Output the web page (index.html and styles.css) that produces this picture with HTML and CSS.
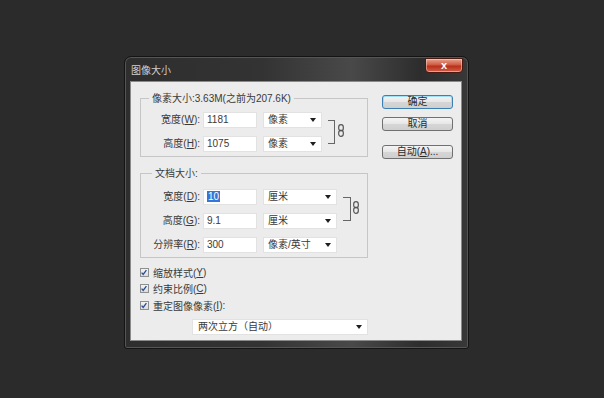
FILE: index.html
```html
<!DOCTYPE html>
<html>
<head>
<meta charset="UTF-8">
<title>图像大小</title>
<link rel="stylesheet" href="styles.css">
</head>
<body>
	<!-- 图像大小对话框 -->
	<div class="window">
		<div class="titlebar">
			<span class="title">图像大小</span>
			<span class="close">x</span>
		</div>
		<div class="client">
			<div class="left">
				<fieldset class="group g1">
					<legend>像素大小:3.63M(之前为207.6K)</legend>
					<div class="group_body">
						<div class="rows">
							<div class="row">
								<span class="label">宽度(<u>W</u>):</span>
								<span class="field">1181</span>
								<span class="select"><span>像素</span><i class="arrow"></i></span>
							</div>
							<div class="row">
								<span class="label">高度(<u>H</u>):</span>
								<span class="field">1075</span>
								<span class="select"><span>像素</span><i class="arrow"></i></span>
							</div>
						</div>
						<span class="bracket"></span>
						<svg class="chain" width="6" height="13" viewBox="0 0 6 13">
							<rect x="0.7" y="0.7" width="4.6" height="6" rx="2.3" fill="none" stroke="#555" stroke-width="1.2"/>
							<rect x="0.7" y="6.3" width="4.6" height="6" rx="2.3" fill="none" stroke="#555" stroke-width="1.2"/>
						</svg>
					</div>
				</fieldset>

				<fieldset class="group g2">
					<legend>文档大小:</legend>
					<div class="group_body">
						<div class="rows">
							<div class="row">
								<span class="label">宽度(<u>D</u>):</span>
								<span class="field"><span class="sel">10</span></span>
								<span class="select"><span>厘米</span><i class="arrow"></i></span>
							</div>
							<div class="row">
								<span class="label">高度(<u>G</u>):</span>
								<span class="field">9.1</span>
								<span class="select"><span>厘米</span><i class="arrow"></i></span>
							</div>
							<div class="row">
								<span class="label">分辨率(<u>R</u>):</span>
								<span class="field">300</span>
								<span class="select"><span>像素/英寸</span><i class="arrow"></i></span>
							</div>
						</div>
						<span class="bracket"></span>
						<svg class="chain" width="6" height="13" viewBox="0 0 6 13">
							<rect x="0.7" y="0.7" width="4.6" height="6" rx="2.3" fill="none" stroke="#555" stroke-width="1.2"/>
							<rect x="0.7" y="6.3" width="4.6" height="6" rx="2.3" fill="none" stroke="#555" stroke-width="1.2"/>
						</svg>
					</div>
				</fieldset>

				<div class="checks">
					<div class="check"><span class="box"><svg width="9" height="9" viewBox="0 0 9 9"><path d="M1.8 4.6 L3.6 6.6 L7.2 1.8" fill="none" stroke="#2a4f96" stroke-width="1.5"/></svg></span>缩放样式(<u>Y</u>)</div>
					<div class="check"><span class="box"><svg width="9" height="9" viewBox="0 0 9 9"><path d="M1.8 4.6 L3.6 6.6 L7.2 1.8" fill="none" stroke="#2a4f96" stroke-width="1.5"/></svg></span>约束比例(<u>C</u>)</div>
					<div class="check"><span class="box"><svg width="9" height="9" viewBox="0 0 9 9"><path d="M1.8 4.6 L3.6 6.6 L7.2 1.8" fill="none" stroke="#2a4f96" stroke-width="1.5"/></svg></span>重定图像像素(<u>I</u>):</div>
				</div>
				<span class="select resample"><span>两次立方（自动）</span><i class="arrow"></i></span>
			</div>

			<div class="right">
				<div class="button default">确定</div>
				<div class="button cancel">取消</div>
				<div class="button auto">自动(<u>A</u>)...</div>
			</div>
		</div>
	</div>
</body>
</html>
```

FILE: styles.css
```css
*{
	box-sizing: border-box;
}
body{
	margin: 0;
	width: 604px;
	height: 398px;
	overflow: hidden;
	background: #2b2b2b;
	font-family: "Liberation Sans", "Noto Sans CJK SC", sans-serif;
	font-size: 10px;
	color: #3a3a3a;
}
u{
	text-decoration: underline;
}
.window{
	margin: 56px 0 0 124px;
	width: 345px;
	height: 293px;
	border: 1px solid #141414;
	border-radius: 7px 7px 3px 3px;
	background: linear-gradient(90deg, #2e2e2e 0%, #333 40%, #494949 66%, #2d2d2d 86%, #383838 100%);
	padding: 0 6px 7px 5px;
	box-shadow: inset 0 0 0 1px #555;
}
.titlebar{
	height: 24px;
	display: flex;
	justify-content: space-between;
	align-items: flex-start;
}
.title{
	padding: 8px 0 0 1px;
	line-height: 12px;
	color: #d0d0d0;
}
.close{
	margin: 1px -1px 0 0;
	width: 38px;
	height: 15px;
	border: 1px solid #4a1a12;
	border-radius: 0 0 4px 4px;
	background: linear-gradient(#e6a390, #cf5a40 45%, #b8301c 55%, #d0604a);
	color: #fff;
	font-weight: bold;
	font-size: 11px;
	line-height: 12px;
	text-align: center;
	box-shadow: inset 0 0 0 1px rgba(255,220,210,0.5);
}
.client{
	height: 260px;
	border: 1px solid #8a8a8a;
	background: #ececec;
	display: flex;
	padding: 10px 8px 0 9px;
	gap: 14px;
}
.left{
	width: 228px;
}
.group{
	margin: 0;
	padding: 0;
	border: 1px solid #c6c6c6;
	min-width: 0;
}
.group legend{
	margin-left: 8px;
	padding: 0 3px;
	line-height: 13px;
}
.g1 .group_body{
	padding: 7px 0 4px 0;
}
.g2{
	margin-top: 10px;
}
.g2 legend{
	margin-left: 11px;
}
.g2 .group_body{
	padding: 9px 0 4px 0;
}
.group_body{
	display: flex;
	align-items: flex-start;
}
.rows{
	display: flex;
	flex-direction: column;
	gap: 8px;
}
.row{
	display: flex;
	align-items: center;
	height: 16px;
}
.label{
	width: 60px;
	text-align: right;
	padding-right: 1px;
	line-height: 16px;
}
.field{
	margin-left: 2px;
	width: 54px;
	height: 16px;
	background: #fff;
	border: 1px solid #e2e2e2;
	padding-left: 3px;
	line-height: 14px;
}
.sel{
	background: #3875d7;
	color: #fff;
	padding: 0 1px;
}
.select{
	margin-left: 6px;
	height: 16px;
	background: #fff;
	border: 1px solid #e2e2e2;
	display: flex;
	justify-content: space-between;
	align-items: center;
	padding: 0 5px 0 4px;
	line-height: 14px;
}
.g1 .select{
	width: 59px;
}
.g2 .select{
	width: 74px;
}
.arrow{
	width: 0;
	height: 0;
	border-left: 3px solid transparent;
	border-right: 3px solid transparent;
	border-top: 4px solid #1e1e1e;
}
.bracket{
	margin: 8px 0 0 6px;
	width: 7px;
	height: 24px;
	border: 1px solid #666;
	border-left: none;
}
.g2 .bracket{
	width: 8px;
}
.chain{
	margin: 12px 0 0 3px;
}
.g2 .chain{
	margin-left: 2px;
}
.checks{
	margin-top: 6px;
}
.check{
	display: flex;
	align-items: center;
	height: 16.5px;
}
.box{
	width: 9px;
	height: 9px;
	margin-right: 4px;
	border: 1px solid #8e8f8f;
	background: linear-gradient(#f4f4f4, #dcdcdc);
	display: flex;
}
.box svg{
	margin: -1px 0 0 -1px;
}
.resample{
	margin: 5px 0 0 52px;
	width: 176px;
	padding-left: 5px;
}
.right{
	width: 71px;
	display: flex;
	flex-direction: column;
}
.button{
	height: 14px;
	border: 1px solid #707070;
	border-radius: 3px;
	background: linear-gradient(#f4f4f4, #e6e6e6 50%, #d6d6d6 51%, #cfcfcf);
	text-align: center;
	line-height: 12px;
	color: #2a2a2a;
}
.default{
	margin-top: 3px;
	border-color: #3c7fb1;
	box-shadow: inset 0 0 0 1px #9fe0f8;
}
.cancel{
	margin-top: 8px;
}
.auto{
	margin-top: 14px;
}
```
